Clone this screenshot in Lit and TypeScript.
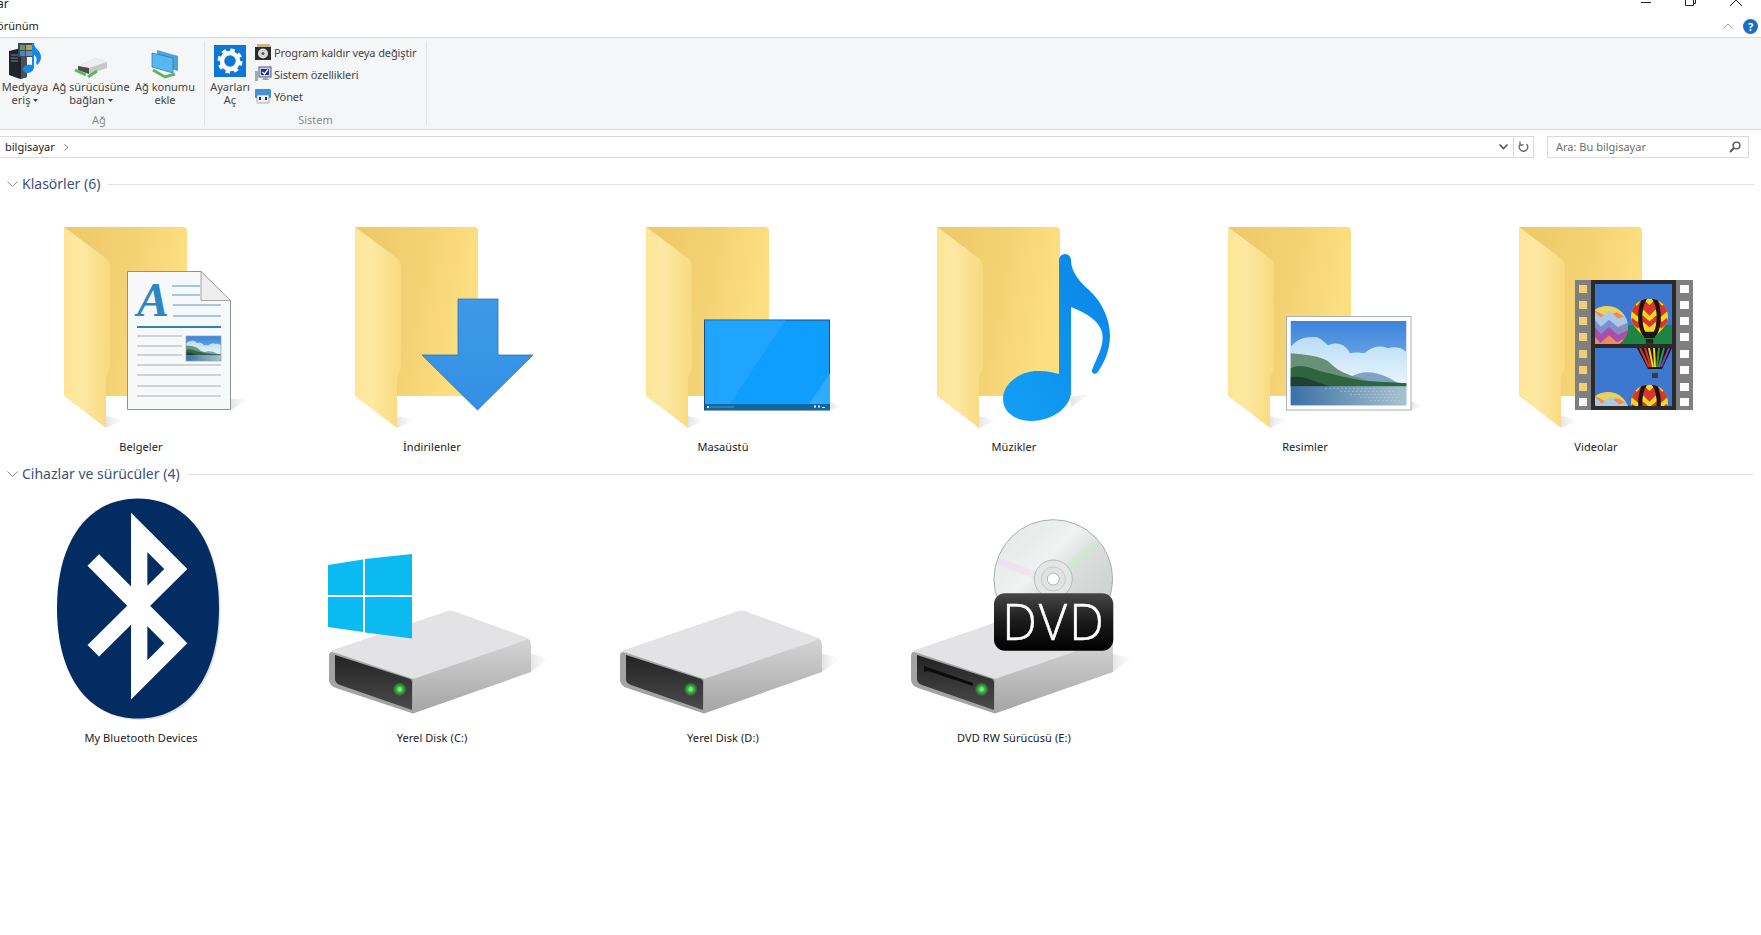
import { LitElement, html, css, svg } from 'lit';
import { customElement } from 'lit/decorators.js';

// everything on the drawing layer is in real pixels, relative to the folder / drive corner
const shared = svg`
  <defs>
    <linearGradient id="fBack" x1="0" y1="0" x2="1" y2="0.25">
      <stop offset="0" stop-color="#eec768"/><stop offset="0.55" stop-color="#f3d273"/><stop offset="1" stop-color="#fddf82"/>
    </linearGradient>
    <linearGradient id="fFront" x1="0" y1="0" x2="1" y2="0">
      <stop offset="0" stop-color="#fde597"/><stop offset="0.35" stop-color="#fee9a4"/><stop offset="1" stop-color="#f8d97f"/>
    </linearGradient>
    <linearGradient id="shadow" x1="0" y1="0" x2="1" y2="0">
      <stop offset="0" stop-color="#a8a8a8" stop-opacity="0.3"/><stop offset="1" stop-color="#ccc" stop-opacity="0"/>
    </linearGradient>
    <linearGradient id="note" x1="0" y1="1" x2="1" y2="0">
      <stop offset="0" stop-color="#13a0f5"/><stop offset="1" stop-color="#0a84e6"/>
    </linearGradient>
    <linearGradient id="arrow" x1="0" y1="0" x2="0" y2="1">
      <stop offset="0" stop-color="#3e9ae8"/><stop offset="1" stop-color="#338fe3"/>
    </linearGradient>
    <linearGradient id="sky" x1="0" y1="0" x2="0" y2="1">
      <stop offset="0" stop-color="#3c83dc"/><stop offset="0.5" stop-color="#6fa8e4"/>
    </linearGradient>
    <linearGradient id="cloud" x1="0" y1="0" x2="0" y2="1">
      <stop offset="0" stop-color="#b8dcf5"/><stop offset="1" stop-color="#eaf6fb"/>
    </linearGradient>
    <linearGradient id="water" x1="0" y1="0" x2="1" y2="0">
      <stop offset="0" stop-color="#3b6fa6"/><stop offset="1" stop-color="#a7c3cf"/>
    </linearGradient>
    <linearGradient id="driveSide" x1="0" y1="0" x2="0" y2="1">
      <stop offset="0" stop-color="#e6e6e8"/><stop offset="0.45" stop-color="#c9c9ca"/><stop offset="1" stop-color="#a5a5a5"/>
    </linearGradient>
    <linearGradient id="panel" x1="0" y1="0" x2="0" y2="1">
      <stop offset="0" stop-color="#232323"/><stop offset="1" stop-color="#4a4a4a"/>
    </linearGradient>
    <linearGradient id="badge" x1="0" y1="0" x2="0" y2="1">
      <stop offset="0" stop-color="#474747"/><stop offset="0.5" stop-color="#1a1a1a"/><stop offset="1" stop-color="#000"/>
    </linearGradient>
    <radialGradient id="led"><stop offset="0.25" stop-color="#3fe04a"/><stop offset="1" stop-color="#3fe04a" stop-opacity="0"/></radialGradient>
    <linearGradient id="disc" x1="0" y1="0" x2="1" y2="1">
      <stop offset="0" stop-color="#e2e6e6"/><stop offset="0.4" stop-color="#f0f2f1"/><stop offset="0.55" stop-color="#d9dddb"/><stop offset="1" stop-color="#c6caca"/>
    </linearGradient>
    <clipPath id="frameTop"><rect x="76" y="57" width="77" height="60"/></clipPath>
    <clipPath id="frameBottom"><rect x="76" y="121" width="77" height="58"/></clipPath>
    <clipPath id="balloonShape"><path d="M20 0C32 0 40 9 40 20C40 30 28 38 25 43H15C12 38 0 30 0 20C0 9 8 0 20 0Z"/></clipPath>
    <clipPath id="pastelShape"><ellipse cx="20" cy="20" rx="20" ry="20"/></clipPath>
    <symbol id="landscape" viewBox="0 0 117 84" preserveAspectRatio="none">
      <rect width="117" height="84" fill="url(#sky)"/>
      <path d="M0 26C5 20 12 15 25 16C32 17 34 22 38 24C48 20 56 24 60 32C68 30 74 33 76 31C82 25 92 24 98 27C106 25 113 27 117 31V65H0Z" fill="url(#cloud)"/>
      <path d="M60 56C70 50 80 50 90 53C100 56 105 60 112 64H60Z" fill="#7fa3c2"/>
      <path d="M0 32C15 33 30 35 38 40C45 47 50 50 60 54L80 60L117 62V65H0Z" fill="#6a9078"/>
      <path d="M0 47C10 42 20 46 30 50C45 53 60 58 80 60L117 62V65H0Z" fill="#2f6440"/>
      <path d="M0 56C10 54 20 58 30 62L40 65H0Z" fill="#1f4030"/>
      <rect y="65" width="117" height="19" fill="url(#water)"/>
      <path d="M35 67h50M50 70h55M60 73h50M70 76h40M80 79h30" stroke="#dfeaf0" stroke-width="0.6" stroke-dasharray="2 2" opacity="0.7"/>
    </symbol>
    <symbol id="balloon" viewBox="0 0 40 50">
      <g clip-path="url(#balloonShape)">
        <rect width="40" height="44" fill="#f5d81e"/>
        <polyline points="0,8 7,14 13,6 20,13 27,6 33,14 40,8" fill="none" stroke="#d8362b" stroke-width="8"/>
        <polyline points="0,23 7,29 13,22 20,28 27,22 33,29 40,23" fill="none" stroke="#d8362b" stroke-width="5"/>
        <ellipse cx="20" cy="20" rx="10" ry="23" fill="none" stroke="#1c1512" stroke-width="4.5"/>
        <path d="M14 36H26V44H14Z" fill="#1c1512"/>
      </g>
      <rect x="16" y="44" width="8" height="5" fill="#222"/>
    </symbol>
    <symbol id="pastel" viewBox="0 0 40 40">
      <g clip-path="url(#pastelShape)" fill="none">
        <rect width="40" height="40" fill="#f08a5a"/>
        <polyline points="-2,4 8,-1 18,4 30,1 42,8" stroke="#e8d45a" stroke-width="9"/>
        <polyline points="-2,13 7,9 14,16 22,9 30,16 42,11" stroke="#a9c9e8" stroke-width="7"/>
        <polyline points="-2,21 7,16 14,24 22,17 30,24 42,18" stroke="#7f8ed0" stroke-width="6"/>
        <polyline points="-2,28 7,23 14,31 22,24 30,31 42,25" stroke="#a84fae" stroke-width="6"/>
      </g>
    </symbol>
  </defs>
`;

const folderBody = svg`
  <path d="M42 201L60 193L42 189Z" fill="url(#shadow)"/>
  <path d="M0 0H119Q123 0 123 4V169H30L10 20Z" fill="url(#fBack)"/>
  <path d="M0 0L43 32Q46 35 46 39V139Q46 143 44 146Q42 149 42 153V201L0 169Z" fill="url(#fFront)"/>
`;

const documentIcon = svg`
  <path d="M167 172L186 172L167 183Z" fill="url(#shadow)"/>
  <path d="M63.5 44.5H137L166.5 73.5V182.5H63.5Z" fill="#f7f8fa" stroke="#8d9499"/>
  <path d="M137 44.5V73.5H166.5Z" fill="#eeeeee" stroke="#a6a6a6"/>
  <text x="73" y="89" class="glyph">A</text>
  <path d="M108 59H136M108 68H136M109 78H157M109 89H157" stroke="#4c9ac9" stroke-width="1"/>
  <path d="M73 100H157" stroke="#2d83b5" stroke-width="2"/>
  <path d="M73 109H118M73 119H118M73 128H118M73 138H157M73 148H157M73 159H157M73 169H157" stroke="#a9aeb2" stroke-width="1"/>
  <use href="#landscape" x="122" y="109" width="35" height="25"/>
  <rect x="122" y="109" width="35" height="25" fill="none" stroke="#8aa3b8" stroke-width="0.7"/>
`;

const downloadIcon = svg`
  <path d="M103 72H143V128H178L122.5 183L67 128H103Z" fill="url(#arrow)" stroke="#2b72b3" stroke-width="0.8"/>
`;

const desktopIcon = svg`
  <path d="M184 175L196 179L184 183Z" fill="url(#shadow)"/>
  <rect x="58.5" y="93" width="125" height="90" fill="#0f9dff" stroke="#1a4d78"/>
  <path d="M59 93.5H139L84 177H59Z" fill="#1fa4ff"/>
  <path d="M163 177L184 146V177Z" fill="#2fabff"/>
  <rect x="59" y="177" width="125" height="6" fill="#0e689f"/>
  <rect x="61" y="179" width="2" height="2" fill="#dff"/>
  <path d="M64 180H88" stroke="#3b86b5" stroke-width="1.5"/>
  <path d="M168 178.5h2v2h-2ZM172 178.5h2v2h-2ZM176 180h3v1h-3Z" fill="#dff"/>
`;

const noteIcon = svg`
  <path d="M134 170L155 166L134 180Z" fill="url(#shadow)"/>
  <path d="M122 33A6 6 0 0 1 134 33C134 45 143 55 152 63C165 75 173 92 173 109C173 124 166 138 160 146C158 148 154 146 155 143C160 130 168 118 165 105C161 92 148 86 134 80V165C134 180 115 194 95 194C78 194 66 185 66 172C66 155 85 144 100 144C108 143.5 116 145 122 147Z" fill="url(#note)"/>
`;

const pictureIcon = svg`
  <path d="M183 174L196 179L183 183Z" fill="url(#shadow)"/>
  <rect x="58.5" y="89.5" width="124.5" height="93.5" fill="#fdfdfd" stroke="#aab2b8"/>
  <use href="#landscape" x="62.5" y="94" width="116" height="84.5"/>
`;

const sprockets = [62, 78, 94, 110, 127, 143, 160, 175];

const filmIcon = svg`
  <rect x="56" y="53" width="118" height="130" fill="#7f7f7f"/>
  ${sprockets.map((y, i) => svg`
    <rect x="60" y="${y - 4}" width="8" height="8" fill="${i === 7 ? '#f7f7f7' : '#f1cf75'}"/>
    <rect x="161" y="${y - 4}" width="9" height="8" fill="#fafafa"/>
  `)}
  <rect x="72" y="53" width="85" height="130" fill="#2b2b2b"/>
  <g clip-path="url(#frameTop)">
    <rect x="76" y="57" width="77" height="60" fill="#3d78d0"/>
    <rect x="100" y="98" width="53" height="19" fill="#1f8443"/>
    <use href="#pastel" x="67" y="79" width="42" height="42"/>
    <use href="#balloon" x="112" y="71" width="37" height="47"/>
  </g>
  <g clip-path="url(#frameBottom)">
    <rect x="76" y="121" width="77" height="58" fill="#3d78d0"/>
    <use href="#pastel" x="68" y="165" width="42" height="42"/>
    <use href="#balloon" x="112" y="157" width="37" height="47"/>
    <path d="M118 121H153L143 142H129Z" fill="#1c1512"/>
    <path d="M121 121L130 140M126 121L132 140" stroke="#d8362b" stroke-width="2"/>
    <path d="M130 121L134 140M135 121L136 140" stroke="#f5d81e" stroke-width="2"/>
    <path d="M140 121L138 140M145 121L140 140" stroke="#2c9a46" stroke-width="2"/>
    <path d="M150 121L142 140" stroke="#7a3cc0" stroke-width="2"/>
    <rect x="133" y="146" width="6" height="5" fill="#3a3a3a"/>
  </g>
`;

const bluetoothOval = 'M125 7.5C175 7.5 206 50 206 117C206 185 175 227.5 125 227.5C75 227.5 44 185 44 117C44 50 75 7.5 125 7.5Z';

const bluetoothIcon = svg`
  <path d="${bluetoothOval}" fill="#dfe3e8" transform="translate(1.5 1.5)"/>
  <path d="${bluetoothOval}" fill="#032c62"/>
  <path d="M80.3 69L162.8 152.3L126.2 188.9V41.4L162.8 78L80.3 159.7" fill="none" stroke="#fff" stroke-width="16.3" stroke-miterlimit="6"/>
`;

const windowsLogo = svg`
  <path d="M24 74L59 68.5V104H24ZM61 68L108 63V104H61ZM24 106H59V141L24 136ZM61 106H108V147.5L61 141.5Z" fill="#0abaf0"/>
`;

const drive = (slot = false) => svg`
  <g transform="translate(24 119)">
    <path d="M203 44L222 48L203 62Z" fill="url(#shadow)"/>
    <path d="M3 41L117 2Q121 0 125 1L199 28Q203 30 203 36V62L85 103.5L40 60Z" fill="url(#driveSide)"/>
    <path d="M3 41L117 2Q121 0 125 1L199 28Q201 29 190 33L85 69Z" fill="#e3e3e5"/>
    <path d="M4 42L85 69V103.5L8 78Q1 75 1 70V46Q1 42 4 42Z" fill="#a3a3a3"/>
    <path d="M7 45L82 69Q84 70 84 72V100L12 75Q7 73 7 69Z" fill="url(#panel)"/>
    ${slot ? svg`<path d="M14 56L63 73V76L18 61L14 62Z" fill="#0c0c0c"/>` : ''}
    <circle cx="71.7" cy="79.3" r="7" fill="url(#led)"/>
    <circle cx="71.7" cy="79.3" r="2" fill="#6cf06a"/>
  </g>
`;

const dvdIcon = svg`
  ${drive(true)}
  <circle cx="167.3" cy="88" r="59.3" fill="url(#disc)" stroke="#a9adad"/>
  <path d="M172 82L214 52" stroke="#c8ecd0" stroke-width="8" opacity="0.45"/>
  <path d="M160 88L112 70" stroke="#f0d8ec" stroke-width="7" opacity="0.45"/>
  <circle cx="167.3" cy="88" r="19" fill="#e2e6e5" stroke="#b6baba"/>
  <circle cx="167.3" cy="88" r="12" fill="#dfe3e2" stroke="#c6caca"/>
  <circle cx="167.3" cy="88" r="6" fill="#fff" stroke="#b0b4b4"/>
  <rect x="108" y="102.3" width="119.3" height="57.4" rx="11" fill="url(#badge)"/>
  <text x="168" y="149" class="dvd">DVD</text>
`;

const folders = [
  { name: 'Belgeler', art: documentIcon },
  { name: 'İndirilenler', art: downloadIcon },
  { name: 'Masaüstü', art: desktopIcon },
  { name: 'Müzikler', art: noteIcon },
  { name: 'Resimler', art: pictureIcon },
  { name: 'Videolar', art: filmIcon },
];

const devices = [
  { name: 'My Bluetooth Devices', art: bluetoothIcon },
  { name: 'Yerel Disk (C:)', art: svg`${drive()}${windowsLogo}` },
  { name: 'Yerel Disk (D:)', art: drive() },
  { name: 'DVD RW Sürücüsü (E:)', art: dvdIcon },
];

const dropArrow = html`<svg class="drop" width="5" height="3"><path d="M0 0H5L2.5 3Z" fill="#444"/></svg>`;

@customElement('app-root')
export class AppRoot extends LitElement {
  static styles = css`
    :host {
      display: block;
      width: 1761px;
      height: 935px;
      overflow: hidden;
      background: #fff;
      font-family: "Noto Sans", "Open Sans", sans-serif;
      font-size: 11px;
      color: #1c1c1c;
    }
    svg { display: block; overflow: visible; }
    .defs { width: 0; height: 0; }

    .title {
      height: 15px;
      display: flex;
      justify-content: space-between;
      align-items: flex-end;
      overflow: hidden;
    }
    .title span { margin: 0 0 3px -3px; line-height: 16px; font-size: 12px; }
    .controls { display: flex; gap: 34px; margin-right: 20px; align-self: flex-start; }

    .tabs {
      height: 22px;
      display: flex;
      justify-content: space-between;
      align-items: center;
      overflow: hidden;
    }
    .tabs span { margin: 0 0 2px -11px; }
    .tabs-right { display: flex; align-items: center; gap: 10px; margin-right: 3px; }
    .help {
      width: 15px;
      height: 15px;
      border-radius: 50%;
      background: #1b6ec2;
      color: #fff;
      font-size: 11px;
      font-weight: 700;
      line-height: 15px;
      text-align: center;
    }

    .ribbon {
      height: 91px;
      display: flex;
      background: #f5f6f7;
      border-top: 1px solid #d9d9d9;
      border-bottom: 1px solid #d9d9d9;
      color: #444;
    }
    .group {
      display: flex;
      flex-direction: column;
      height: 84px;
      margin-top: 3px;
      border-right: 1px solid #e2e3e4;
    }
    .group.net { width: 204px; }
    .group.sys { width: 221px; }
    .items { display: flex; flex: 1; margin-top: -3px; }
    .group-label { height: 14px; line-height: 14px; text-align: center; color: #8b8b8b; margin-bottom: -2px; }
    .group.net .group-label { padding-right: 6px; }

    .big {
      display: flex;
      flex-direction: column;
      align-items: center;
      text-align: center;
      line-height: 13px;
      white-space: nowrap;
    }
    .big .pic { height: 42px; width: 100%; display: flex; align-items: flex-end; justify-content: center; padding-bottom: 3px; box-sizing: border-box; }
    .drop { display: inline-block; margin: 0 0 2px 3px; }

    .rows { display: flex; flex-direction: column; padding-top: 3px; }
    .row { height: 22px; display: flex; align-items: center; gap: 3px; white-space: nowrap; letter-spacing: -0.1px; }

    .bar { display: flex; margin-top: 6px; height: 22px; }
    .address {
      width: 1535px;
      margin-left: -1px;
      box-sizing: border-box;
      border: 1px solid #d9d9d9;
      display: flex;
      align-items: center;
      padding: 0 0 0 5px;
      color: #222;
    }
    .address span, .search span { margin-bottom: 2px; }
    .crumb-sep { margin-left: 9px; }
    .address-end { margin-left: auto; display: flex; height: 100%; align-items: center; }
    .address-end .down { width: 20px; display: flex; justify-content: center; }
    .refresh { width: 19px; height: 100%; border-left: 1px solid #d9d9d9; display: flex; align-items: center; justify-content: center; }
    .search {
      width: 202px;
      margin-left: 13px;
      box-sizing: border-box;
      border: 1px solid #d9d9d9;
      display: flex;
      align-items: center;
      justify-content: space-between;
      padding: 0 7px 0 8px;
      color: #6d6d6d;
    }

    .section { display: flex; align-items: center; height: 20px; padding-left: 7px; margin-right: 7px; }
    .section.first { margin-top: 16px; }
    .section.second { margin-top: 8px; }
    .section-name { margin: 0 8px 0 4px; font-size: 14px; line-height: 20px; color: #3a4f7a; white-space: nowrap; }
    .section-line { flex: 1; height: 1px; background: #e2e2e2; }

    .tiles { display: grid; grid-template-columns: repeat(6, 291px); margin-left: -4.5px; }
    .tiles.folders { padding-top: 26px; }
    .tiles.drives { padding-top: 7px; }
    .tile { display: flex; flex-direction: column; align-items: center; }
    .tile label { line-height: 18px; white-space: nowrap; color: #1a1a1a; letter-spacing: 0.08px; }

    .glyph { font-family: "Liberation Serif", serif; font-style: italic; font-weight: 700; font-size: 48px; fill: #2c86c4; }
    .dvd { font-family: "Open Sans", sans-serif; font-weight: 300; font-size: 49px; letter-spacing: 2px; fill: #fff; stroke: #fff; stroke-width: 0.5px; text-anchor: middle; }
  `;

  render() {
    return html`
      <svg class="defs">${shared}</svg>

      <div class="title">
        <span>ar</span>
        <div class="controls">
          <svg width="10" height="15"><path d="M0 2.5H10" stroke="#222"/></svg>
          <svg width="11" height="15"><path d="M0.5 0V5.5H8.5V0M8.5 3.5H10.5V0" fill="none" stroke="#222"/></svg>
          <svg width="11" height="15"><path d="M0 6L6 0M6 0L12 6" stroke="#222" fill="none"/></svg>
        </div>
      </div>

      <div class="tabs">
        <span>Görünüm</span>
        <div class="tabs-right">
          <svg width="10" height="6"><path d="M0.5 5.5L5 1L9.5 5.5" fill="none" stroke="#a8a8a8"/></svg>
          <div class="help">?</div>
        </div>
      </div>

      <div class="ribbon">
        <div class="group net">
          <div class="items">
            <div class="big" style="width:50px">
              <div class="pic">
                <svg width="34" height="34" viewBox="0 0 34 34">
                  <path d="M1 8L13 5L19 8V34L12 36L1 32Z" fill="#20242b"/>
                  <path d="M13 5L19 8V34L13 36Z" fill="#4b5058"/>
                  <path d="M3 12h7M3 15h7M3 18h7" stroke="#6a83a8"/>
                  <rect x="10" y="0" width="16" height="14" fill="#3a4a5a"/>
                  <rect x="12" y="2" width="5" height="5" fill="#5f9e6b"/><rect x="18" y="2" width="6" height="5" fill="#c0a04a"/>
                  <rect x="12" y="8" width="5" height="5" fill="#4d86c6"/><rect x="18" y="8" width="6" height="5" fill="#6a8fb0"/>
                  <path d="M26 0C26 6 33 7 33 14C33 18 31 20 29 22L28 20C29 17 29 14 26 12V24C26 28 22 30 19 30C16 30 15 28 15 26C15 23 19 21 24 22V0Z" fill="#1788e0"/>
                </svg>
              </div>
              <span>Medyaya</span>
              <span>eriş${dropArrow}</span>
            </div>
            <div class="big" style="width:78px;margin-left:2px">
              <div class="pic">
                <svg width="32" height="20" viewBox="0 0 32 20">
                  <path d="M3 9L21 1L32 5V11L14 17L3 13Z" fill="#c7c9c8"/>
                  <path d="M3 9L21 1L32 5L14 11Z" fill="#eeeeee"/>
                  <path d="M3 9L14 11V17L3 13Z" fill="#4a4d4c"/>
                  <path d="M0 13L11 18M13 20L22 14" stroke="#5cb85c" stroke-width="3"/>
                </svg>
              </div>
              <span>Ağ sürücüsüne</span>
              <span>bağlan${dropArrow}</span>
            </div>
            <div class="big" style="width:70px">
              <div class="pic">
                <svg width="28" height="27" viewBox="0 0 28 27">
                  <path d="M6 0L27 6V21L6 15Z" fill="#4ba3dd"/>
                  <path d="M1 3L22 8V23L1 17Z" fill="#56b8ee" stroke="#2b6ea3" stroke-width="0.7"/>
                  <path d="M2 20L14 27L24 24" fill="none" stroke="#5cb85c" stroke-width="3"/>
                </svg>
              </div>
              <span>Ağ konumu</span>
              <span>ekle</span>
            </div>
          </div>
          <div class="group-label">Ağ</div>
        </div>

        <div class="group sys">
          <div class="items">
            <div class="big" style="width:50px">
              <div class="pic">
                <svg width="32" height="32" viewBox="0 0 32 32">
                  <rect width="32" height="32" fill="#0a78d4"/>
                  <circle cx="16" cy="16" r="8" fill="none" stroke="#fff" stroke-width="4.5"/>
                  <circle cx="16" cy="16" r="10.5" fill="none" stroke="#fff" stroke-width="4" stroke-dasharray="4.25 4"/>
                </svg>
              </div>
              <span>Ayarları</span>
              <span>Aç</span>
            </div>
            <div class="rows">
              <div class="row">
                <svg width="16" height="16" viewBox="0 0 16 16">
                  <path d="M2 0H14L16 2V4H2Z" fill="#c8b48a"/>
                  <rect y="3" width="16" height="13" fill="#2d2d2d"/>
                  <circle cx="8" cy="9.5" r="5" fill="#d8d8d8"/><circle cx="8" cy="9.5" r="1.5" fill="#555"/>
                </svg>
                <span>Program kaldır veya değiştir</span>
              </div>
              <div class="row">
                <svg width="16" height="16" viewBox="0 0 16 16">
                  <rect y="5" width="3" height="10" fill="#8fb5a8"/>
                  <rect x="4" y="1" width="12" height="10" fill="#cfd4dc" stroke="#4a5a8a"/>
                  <rect x="6" y="3" width="8" height="6" fill="#1e2f9a"/>
                  <path d="M7.5 6L9.5 8L13 3.5" fill="none" stroke="#fff" stroke-width="1.3"/>
                  <path d="M7 14H14L12 11.5H9Z" fill="#9aa3ad"/>
                </svg>
                <span>Sistem özellikleri</span>
              </div>
              <div class="row">
                <svg width="16" height="16" viewBox="0 0 16 16">
                  <rect y="1" width="16" height="9" rx="1" fill="#3e93dc"/>
                  <rect x="2" y="7" width="12" height="8" rx="1" fill="#eef1f4" stroke="#8a9099" stroke-width="0.7"/>
                  <rect x="4" y="9" width="2" height="3" fill="#333"/><rect x="10" y="9" width="2" height="3" fill="#333"/>
                </svg>
                <span>Yönet</span>
              </div>
            </div>
          </div>
          <div class="group-label">Sistem</div>
        </div>
      </div>

      <div class="bar">
        <div class="address">
          <span>bilgisayar</span>
          <svg class="crumb-sep" width="5" height="7"><path d="M0.5 0.5L4 3.5L0.5 6.5" fill="none" stroke="#777"/></svg>
          <div class="address-end">
            <div class="down"><svg width="9" height="6"><path d="M0.5 0.5L4.5 4.5L8.5 0.5" fill="none" stroke="#555" stroke-width="1.6"/></svg></div>
            <div class="refresh">
              <svg width="11" height="12" viewBox="0 0 11 12"><path d="M8.5 3A4.2 4.2 0 1 1 2 3.5M2 0.5V4H5.5" fill="none" stroke="#666" stroke-width="1.3"/></svg>
            </div>
          </div>
        </div>
        <div class="search">
          <span>Ara: Bu bilgisayar</span>
          <svg width="12" height="12"><circle cx="7.5" cy="4.5" r="3.4" fill="none" stroke="#555" stroke-width="1.4"/><path d="M5 7L1 11" stroke="#555" stroke-width="2"/></svg>
        </div>
      </div>

      <div class="section first">
        <svg width="11" height="6"><path d="M0.5 0.5L5.5 5.5L10.5 0.5" fill="none" stroke="#8a9099"/></svg>
        <span class="section-name">Klasörler (6)</span>
        <div class="section-line"></div>
      </div>
      <div class="tiles folders">
        ${folders.map((f) => html`
          <div class="tile">
            <svg width="256" height="218"><g transform="translate(51 7)">${folderBody}${f.art}</g></svg>
            <label>${f.name}</label>
          </div>
        `)}
      </div>

      <div class="section second">
        <svg width="11" height="6"><path d="M0.5 0.5L5.5 5.5L10.5 0.5" fill="none" stroke="#8a9099"/></svg>
        <span class="section-name">Cihazlar ve sürücüler (4)</span>
        <div class="section-line"></div>
      </div>
      <div class="tiles drives">
        ${devices.map((d) => html`
          <div class="tile">
            <svg width="256" height="238">${d.art}</svg>
            <label>${d.name}</label>
          </div>
        `)}
      </div>
    `;
  }
}
